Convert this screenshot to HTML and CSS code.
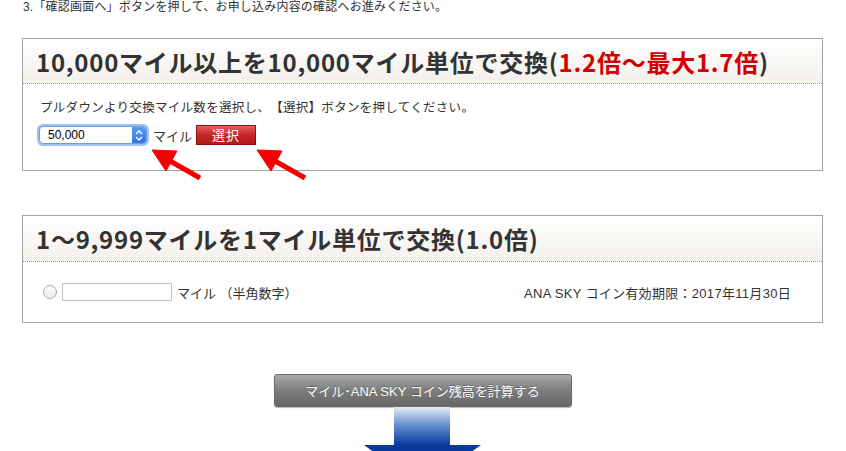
FILE: index.html
```html
<!DOCTYPE html>
<html lang="ja">
<head>
    <meta charset="UTF-8">
    <meta name="viewport" content="width=device-width, initial-scale=1.0">
    <title>マイル交換</title>
    <link rel="stylesheet" href="styles.css">
</head>
<body>

    <div class="wrap">
        <p class="lead">3.「確認画面へ」ボタンを押して、お申し込み内容の確認へお進みください。</p>

        <!-- 10,000マイル単位 -->
        <div class="box">
            <div class="box-head">
                <h2>10,000マイル以上を10,000マイル単位で交換(<span class="rate">1.2倍〜最大1.7倍</span>)</h2>
            </div>
            <div class="box-body box-body-select">
                <p class="desc">プルダウンより交換マイル数を選択し、【選択】ボタンを押してください。</p>
                <div class="select-row">
                    <div class="select-wrap">
                        <select class="miles-select">
                            <option>50,000</option>
                        </select>
                        <span class="select-arrows">
                            <svg width="8" height="11" viewBox="0 0 8 11"><path d="M1 4 L4 1 L7 4 M1 7 L4 10 L7 7" fill="none" stroke="#fff" stroke-width="1.4"/></svg>
                        </span>
                    </div>
                    <span class="unit">マイル</span>
                    <button class="btn-select">選択</button>
                </div>
            </div>
        </div>

        <!-- 1マイル単位 -->
        <div class="box box-second">
            <div class="box-head">
                <h2>1〜9,999マイルを1マイル単位で交換(1.0倍)</h2>
            </div>
            <div class="box-body box-body-input">
                <div class="input-row">
                    <div class="input-left">
                        <span class="radio"></span>
                        <input type="text" class="miles-input">
                        <span class="unit">マイル （半角数字）</span>
                    </div>
                    <div class="expiry">ANA SKY コイン有効期限：2017年11月30日</div>
                </div>
            </div>
        </div>

        <div class="calc">
            <button class="btn-calc">マイル･ANA SKY コイン残高を計算する</button>
            <svg class="down-arrow" width="118" height="44" viewBox="0 0 118 44">
                <defs>
                    <linearGradient id="blue" x1="0" y1="0" x2="0" y2="44" gradientUnits="userSpaceOnUse">
                        <stop offset="0" stop-color="#e6edf8"/>
                        <stop offset="0.45" stop-color="#5d86cc"/>
                        <stop offset="0.85" stop-color="#0b3d9f"/>
                        <stop offset="1" stop-color="#07399b"/>
                    </linearGradient>
                </defs>
                <path d="M30 0 H86 V38 H117 L58 80 L0 38 H30 Z" fill="url(#blue)"/>
            </svg>
        </div>
    </div>

    <!-- 赤い矢印 -->
    <svg class="pointers" width="846" height="451" viewBox="0 0 846 451">
        <g fill="#f50000" stroke="#f50000">
            <path d="M152 150 L166 171 L177 151 Z" stroke-width="1"/>
            <line x1="170" y1="161" x2="200" y2="178" stroke-width="5"/>
            <path d="M257 150 L271 171 L282 151 Z" stroke-width="1"/>
            <line x1="275" y1="161" x2="305" y2="178" stroke-width="5"/>
        </g>
    </svg>

</body>
</html>
```

FILE: styles.css
```css
body {
    margin: 0;
    font-family: 'Liberation Sans', 'Noto Sans CJK JP', sans-serif;
    color: #333;
    background-color: #fff;
    position: relative;
    overflow: hidden;
    text-spacing-trim: space-all;
}

.wrap {
    width: 801px;
    margin-left: 22px;
}

.lead {
    margin: -2px 0 0 1px;
    font-size: 12px;
    line-height: 18px;
    letter-spacing: 0.2px;
}

/* Cajas */
.box {
    margin-top: 22px;
    border: 1px solid #a3a3a3;
}

.box-second {
    margin-top: 44px;
}

.box-head {
    height: 44px;
    display: flex;
    align-items: center;
    padding: 0 13px;
    background: linear-gradient(#ffffff, #f3f0ea);
    border-bottom: 1px dotted #9a9a9a;
}

.box-second .box-head {
    height: 45px;
}

.box-head h2 {
    margin: 0;
    font-family: 'Noto Sans CJK JP', sans-serif;
    font-size: 24px;
    font-weight: bold;
    color: #333;
    letter-spacing: 0.75px;
}

.rate {
    color: #d10000;
}

.box-body-select {
    padding: 15px 17px 25px;
}

.desc {
    margin: 0;
    font-size: 12.5px;
    line-height: 18px;
    letter-spacing: 0.3px;
}

.select-row {
    display: flex;
    align-items: center;
    margin-top: 8px;
    height: 20px;
    font-size: 13px;
}

.select-wrap {
    display: flex;
    width: 106px;
    height: 16px;
    margin-left: -1px;
    border: 1px solid #6f9fe0;
    border-radius: 4px;
    box-shadow: 0 0 0 2px #9cc2f5;
    overflow: hidden;
    background: #fff;
}

.miles-select {
    flex: 1;
    appearance: none;
    -webkit-appearance: none;
    border: none;
    background: transparent;
    font-family: 'Liberation Sans', sans-serif;
    font-size: 12px;
    color: #000;
    padding: 0 0 0 8px;
    height: 16px;
    outline: none;
}

.select-arrows {
    width: 14px;
    display: flex;
    align-items: center;
    justify-content: center;
    background: linear-gradient(#5b9ef5, #2d74e0);
}

.unit {
    margin-left: 6px;
    font-size: 13px;
}

.btn-select {
    margin-left: 4px;
    width: 60px;
    height: 20px;
    padding: 0;
    border: 1px solid #8a0f0f;
    background: linear-gradient(#e26060, #c42626 50%, #b31a1a);
    color: #fff;
    font-family: 'Noto Sans CJK JP', sans-serif;
    font-size: 13px;
    line-height: 18px;
    letter-spacing: 1px;
}

.box-body-input {
    padding: 20px 31px 20px 20px;
}

.input-row {
    display: flex;
    justify-content: space-between;
    align-items: center;
    height: 20px;
    font-size: 13px;
}

.input-left {
    display: flex;
    align-items: center;
}

.radio {
    width: 12px;
    height: 12px;
    border: 1px solid #aaa;
    border-radius: 50%;
    background: linear-gradient(#fdfdfd, #ececec);
}

.miles-input {
    margin-left: 5px;
    width: 108px;
    height: 16px;
    padding: 0;
    border: 1px solid #c2c2c2;
}

.input-left .unit {
    margin-left: 5px;
}

.expiry {
    letter-spacing: 0.3px;
}

/* Botón calcular */
.calc {
    margin-top: 51px;
    display: flex;
    flex-direction: column;
    align-items: center;
}

.btn-calc {
    width: 298px;
    height: 33px;
    border: 1px solid #6c6c6c;
    border-radius: 3px;
    background: linear-gradient(#a9a9a9, #7d7d7d 50%, #666666);
    color: #fff;
    font-family: 'Liberation Sans', 'Noto Sans CJK JP', sans-serif;
    font-size: 13px;
    text-shadow: 0 -1px 0 rgba(0, 0, 0, 0.3);
    box-shadow: 0 1px 1px rgba(0, 0, 0, 0.3);
}

.down-arrow {
    display: block;
}

.pointers {
    position: absolute;
    top: 0;
    left: 0;
    pointer-events: none;
}
```
